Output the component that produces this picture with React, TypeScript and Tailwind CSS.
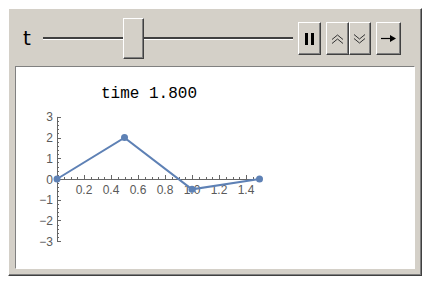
const raised =
  "border border-t-white border-l-white border-r-[#404040] border-b-[#404040] shadow-[inset_-1px_-1px_0_#808080]";

function Btn({ className = "", children }: { className?: string; children: React.ReactNode }) {
  return (
    <div className={`flex items-center justify-center bg-[#d4d0c8] ${raised} ${className}`}>
      {children}
    </div>
  );
}

const X0 = 57;
const Y0 = 178;
const SX = 135;
const SY = 20.7;
const px = (t: number) => X0 + t * SX;
const py = (v: number) => Y0 - v * SY;

function Plot() {
  const pts: [number, number][] = [
    [0, 0],
    [0.5, 2],
    [1.0, -0.5],
    [1.5, 0],
  ];
  const xMinor = Array.from({ length: 31 }, (_, i) => i * 0.05).filter((t) => t <= 1.5);
  const yMinor = Array.from({ length: 31 }, (_, i) => -3 + i * 0.2);
  const font = { fontFamily: "'Liberation Sans', Arial, sans-serif", fontSize: 12, fill: "#5a5a5a" };
  return (
    <svg width="398" height="201" viewBox="16 66 398 201" className="block">
      <text
        x="149"
        y="97"
        textAnchor="middle"
        style={{ fontFamily: "'Liberation Mono', 'Courier New', monospace", fontSize: 16, fill: "#000" }}
      >
        time 1.800
      </text>
      {/* y axis */}
      <line x1={X0 + 0.5} y1={py(3)} x2={X0 + 0.5} y2={py(-3)} stroke="#666" strokeWidth="1" />
      {yMinor.map((v, i) => (
        <line
          key={i}
          x1={X0}
          x2={X0 + (i % 5 === 0 ? 4 : 2)}
          y1={Math.round(py(v)) + 0.5}
          y2={Math.round(py(v)) + 0.5}
          stroke="#666"
          strokeWidth="1"
        />
      ))}
      {[3, 2, 1, 0, -1, -2, -3].map((v) => (
        <text key={v} x={X0 - 4} y={py(v) + 4.5} textAnchor="end" style={font}>
          {v < 0 ? `\u2212${-v}` : v}
        </text>
      ))}
      {/* x axis */}
      <line x1={X0} y1={Y0 + 0.5} x2={px(1.5)} y2={Y0 + 0.5} stroke="#666" strokeWidth="1" />
      {xMinor.map((t, i) => (
        <line
          key={i}
          x1={Math.round(px(t)) + 0.5}
          x2={Math.round(px(t)) + 0.5}
          y1={Y0}
          y2={Y0 - (i % 4 === 0 ? 4 : 2)}
          stroke="#666"
          strokeWidth="1"
        />
      ))}
      {[0.2, 0.4, 0.6, 0.8, 1.0, 1.2, 1.4].map((t) => (
        <text key={t} x={px(t)} y={Y0 + 15} textAnchor="middle" style={font}>
          {t.toFixed(1)}
        </text>
      ))}
      <polyline
        points={pts.map(([t, v]) => `${px(t)},${py(v)}`).join(" ")}
        fill="none"
        stroke="#5e81b5"
        strokeWidth="2"
      />
      {pts.map(([t, v], i) => (
        <circle key={i} cx={px(t)} cy={py(v)} r="3.5" fill="#5e81b5" />
      ))}
    </svg>
  );
}

export default function App() {
  return (
    <div className="w-[430px] h-[282px] bg-white pt-2 pl-2">
      <div className={`w-[414px] h-[268px] bg-[#d4d0c8] ${raised} flex flex-col`}>
        <div className="h-[57px] flex items-center pl-[14px] pt-[2px]">
          <span
            className="text-[20px] leading-none text-black mr-[12px] -mt-[1px]"
            style={{ fontFamily: "'DejaVu Sans', sans-serif" }}
          >
            t
          </span>
          <div className="relative w-[250px] h-[41px] flex items-center">
            <div className="w-full h-[3px] border-t-2 border-t-[#404040] border-b border-b-white" />
            <div className={`absolute left-[80px] top-0 w-[21px] h-[41px] bg-[#d4d0c8] ${raised}`} />
          </div>
          <div className="flex items-center ml-[5px] gap-[5px]">
            <Btn className="w-[23px] h-[33px]">
              <div className="flex gap-[3px]">
                <div className="w-[3px] h-[12px] bg-black" />
                <div className="w-[3px] h-[12px] bg-black" />
              </div>
            </Btn>
            <div className="flex">
              <Btn className="w-[23px] h-[33px]">
                <svg width="13" height="12" viewBox="0 0 13 12">
                  <path d="M1 6.5 L6.5 2 L12 6.5 M1 10.5 L6.5 6 L12 10.5" fill="none" stroke="#333" strokeWidth="1" />
                </svg>
              </Btn>
              <Btn className="w-[22px] h-[33px]">
                <svg width="13" height="12" viewBox="0 0 13 12">
                  <path d="M1 1.5 L6.5 6 L12 1.5 M1 5.5 L6.5 10 L12 5.5" fill="none" stroke="#333" strokeWidth="1" />
                </svg>
              </Btn>
            </div>
            <Btn className="w-[25px] h-[33px]">
              <svg width="15" height="9" viewBox="0 0 15 9">
                <path d="M0 4.5 H10" stroke="#000" strokeWidth="1.2" />
                <path d="M9 1 L15 4.5 L9 8 Z" fill="#000" />
              </svg>
            </Btn>
          </div>
        </div>
        <div className="ml-[6px] w-[400px] h-[203px] bg-white border border-t-[#808080] border-l-[#808080] border-r-white border-b-white">
          <Plot />
        </div>
      </div>
    </div>
  );
}
